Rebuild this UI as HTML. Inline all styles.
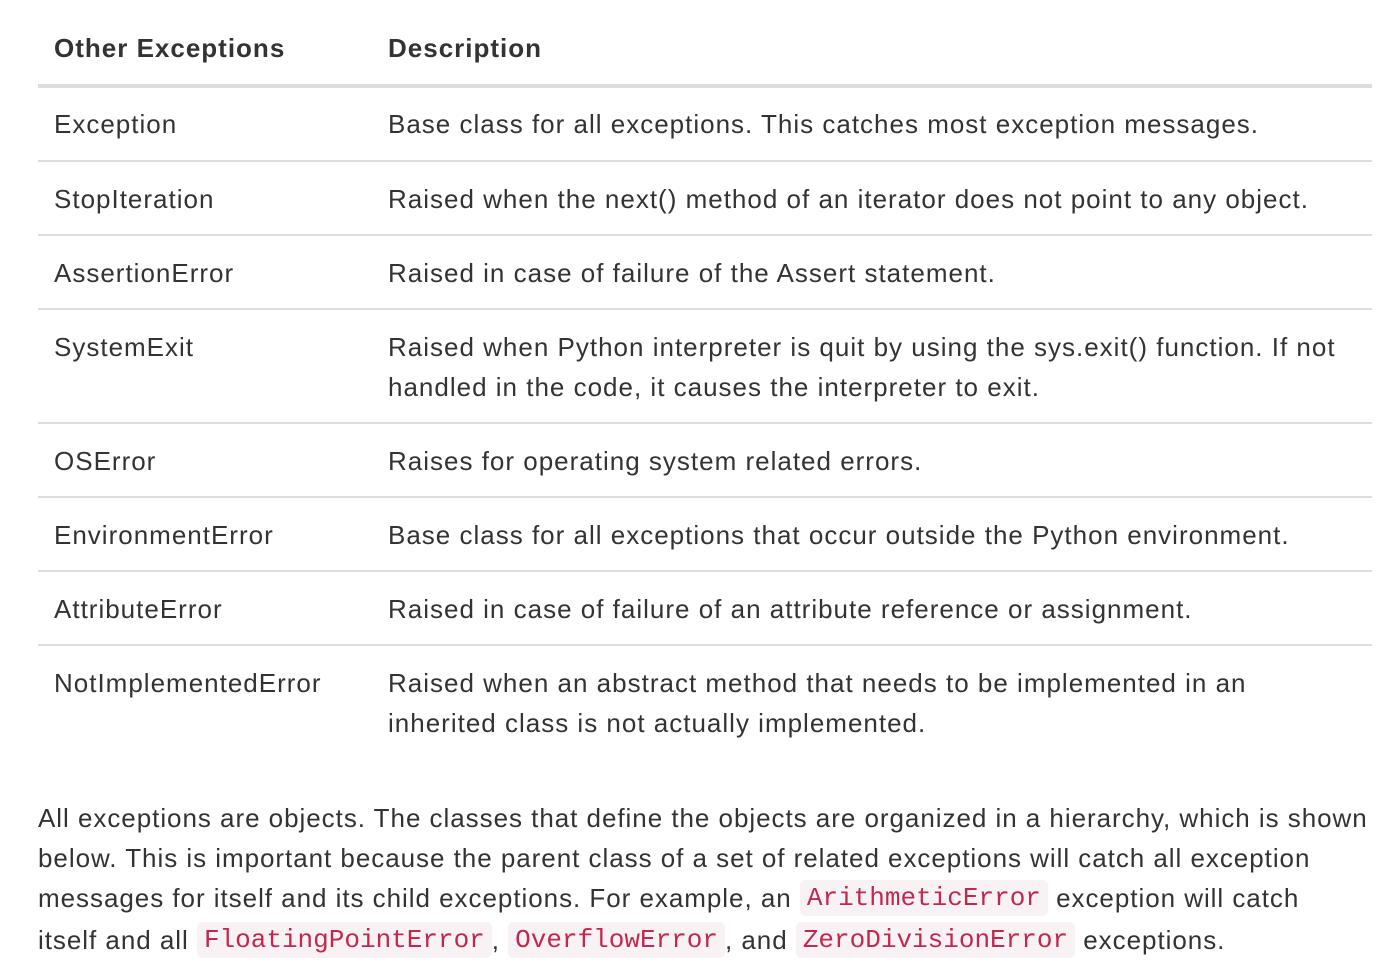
<!DOCTYPE html>
<html><head><meta charset="utf-8"><style>
body{margin:0;width:1392px;height:974px;background:#fff;position:relative;overflow:hidden;font-family:"Liberation Sans",Helvetica,Arial,sans-serif;font-size:26px;color:#333;letter-spacing:1px}
.t{position:absolute;line-height:40px;white-space:nowrap}
.b{font-weight:bold}
.l{position:absolute;left:38px;width:1334px;height:2px;background:#ddd}
.p{position:absolute;left:38px;top:798px;width:1350px;line-height:40px;white-space:nowrap;letter-spacing:0.96px}
code{font-family:"Liberation Mono",Menlo,monospace;font-size:26px;letter-spacing:0;color:#c0294f;background:#f9f2f4;border-radius:6px;padding:3px 7px;position:relative;top:-2px}
</style></head><body>
<div class="t b" style="left:54px;top:28px">Other Exceptions</div>
<div class="t b" style="left:388px;top:28px">Description</div>
<div class="l" style="top:84px;height:4px"></div>

<div class="t" style="left:54px;top:104px">Exception</div>
<div class="t" style="left:388px;top:104px">Base class for all exceptions. This catches most exception messages.</div>
<div class="l" style="top:160px"></div>

<div class="t" style="left:54px;top:179px">StopIteration</div>
<div class="t" style="left:388px;top:179px">Raised when the next() method of an iterator does not point to any object.</div>
<div class="l" style="top:234px"></div>

<div class="t" style="left:54px;top:253px">AssertionError</div>
<div class="t" style="left:388px;top:253px">Raised in case of failure of the Assert statement.</div>
<div class="l" style="top:308px"></div>

<div class="t" style="left:54px;top:327px">SystemExit</div>
<div class="t" style="left:388px;top:327px">Raised when Python interpreter is quit by using the sys.exit() function. If not<br>handled in the code, it causes the interpreter to exit.</div>
<div class="l" style="top:422px"></div>

<div class="t" style="left:54px;top:441px">OSError</div>
<div class="t" style="left:388px;top:441px">Raises for operating system related errors.</div>
<div class="l" style="top:496px"></div>

<div class="t" style="left:54px;top:515px">EnvironmentError</div>
<div class="t" style="left:388px;top:515px">Base class for all exceptions that occur outside the Python environment.</div>
<div class="l" style="top:570px"></div>

<div class="t" style="left:54px;top:589px">AttributeError</div>
<div class="t" style="left:388px;top:589px">Raised in case of failure of an attribute reference or assignment.</div>
<div class="l" style="top:644px"></div>

<div class="t" style="left:54px;top:663px">NotImplementedError</div>
<div class="t" style="left:388px;top:663px">Raised when an abstract method that needs to be implemented in an<br>inherited class is not actually implemented.</div>

<div class="p">All exceptions are objects. The classes that define the objects are organized in a hierarchy, which is shown<br>below. This is important because the parent class of a set of related exceptions will catch all exception<br>messages for itself and its child exceptions. For example, an <code>ArithmeticError</code> exception will catch<br>itself and all <code>FloatingPointError</code>, <code>OverflowError</code>, and <code>ZeroDivisionError</code> exceptions.</div>
</body></html>
